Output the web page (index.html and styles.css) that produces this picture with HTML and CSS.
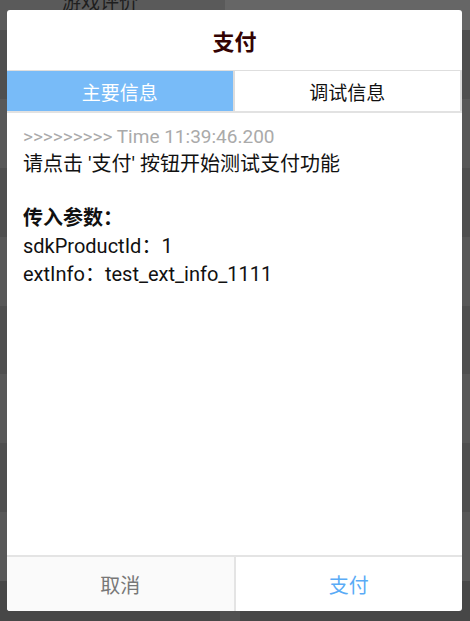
FILE: index.html
```html
<!DOCTYPE html>
<html lang="zh-CN">
<head>
<meta charset="utf-8">
<title>支付</title>
<link rel="stylesheet" href="styles.css">
</head>
<body>
<div class="screen">
  <div class="backdrop">
    <div class="bg-row bg-top"><span class="bg-label">游戏评价</span><span class="bg-btn"></span></div>
    <div class="bg-row bg-a"></div>
    <div class="bg-row bg-b"></div>
    <div class="bg-row bg-a"></div>
    <div class="bg-row bg-b"></div>
    <div class="bg-row bg-a"></div>
    <div class="bg-row bg-b"></div>
    <div class="bg-row bg-a"></div>
    <div class="bg-row bg-b"></div>
    <div class="bg-row bg-bottom"><span class="bg-tick"></span></div>
  </div>
  <div class="dialog">
    <div class="title">支付</div>
    <div class="tabs">
      <div class="tab tab-active">主要信息</div>
      <div class="tab tab-idle">调试信息</div>
    </div>
    <div class="content">
      <div class="time">&gt;&gt;&gt;&gt;&gt;&gt;&gt;&gt;&gt; Time 11:39:46.200</div>
      <div class="line">请点击 '支付' 按钮开始测试支付功能</div>
      <div class="line blank"></div>
      <div class="line bold">传入参数：</div>
      <div class="line">sdkProductId：1</div>
      <div class="line">extInfo：test_ext_info_1111</div>
    </div>
    <div class="actions">
      <div class="btn btn-cancel">取消</div>
      <div class="btn btn-pay">支付</div>
    </div>
  </div>
</div>
</body>
</html>
```

FILE: styles.css
```css
html, body {
  margin: 0;
  padding: 0;
}
body {
  width: 470px;
  height: 621px;
  overflow: hidden;
  font-family: Roboto, "Noto Sans CJK SC", sans-serif;
}
.screen {
  position: relative;
  width: 470px;
  height: 621px;
  background: #525252;
}
.backdrop {
  display: flex;
  flex-direction: column;
  height: 100%;
}
.bg-row {
  flex: 1;
}
.bg-top {
  flex: 0 0 30px;
  display: flex;
  background: #5a5a5a;
}
.bg-label {
  margin-left: 62px;
  margin-top: -10px;
  font-size: 19px;
  color: #1e1e1e;
  font-family: "Noto Sans CJK SC", sans-serif;
  line-height: 22px;
  height: 20px;
}
.bg-btn {
  margin-left: auto;
  width: 245px;
  background: #666;
}
.bg-a { background: #4f4f4f; }
.bg-b { background: #585858; }
.bg-bottom {
  flex: 0 0 40px;
  background: #474747;
  display: flex;
  justify-content: center;
}
.bg-tick {
  width: 20px;
  margin-left: -10px;
  margin-top: 10px;
  background: #505050;
}
.dialog {
  position: absolute;
  left: 7px;
  top: 10px;
  width: 455px;
  height: 601px;
  background: #fff;
  border-radius: 3px;
  overflow: hidden;
  display: flex;
  flex-direction: column;
}
.title {
  height: 61px;
  border-bottom: 1px solid #dedede;
  box-sizing: border-box;
  display: flex;
  align-items: center;
  justify-content: center;
  font-family: "Noto Sans CJK SC", sans-serif;
  font-weight: bold;
  font-size: 22px;
  color: #330303;
}
.tabs {
  display: flex;
  height: 42px;
  border-bottom: 2px solid #e2e2e2;
  box-sizing: border-box;
}
.tab {
  flex: 1;
  display: flex;
  align-items: center;
  justify-content: center;
  font-family: "Noto Sans CJK SC", sans-serif;
  font-size: 19px;
}
.tab-active {
  background: #78bbf8;
  color: #fff;
}
.tab-idle {
  color: #111;
  border-left: 2px solid #dcdcdc;
  border-right: 2px solid #dcdcdc;
}
.content {
  flex: 1;
  padding: 11px 16px 0 16px;
  color: #111;
  font-size: 20px;
  line-height: 28px;
}
.time {
  color: #aaa;
  font-size: 19px;
  line-height: 26px;
}
.line.blank {
  height: 26px;
}
.bold {
  font-weight: bold;
}
.actions {
  display: flex;
  height: 56px;
  border-top: 2px solid #e4e4e4;
  box-sizing: border-box;
}
.btn {
  flex: 1;
  display: flex;
  align-items: center;
  justify-content: center;
  font-family: "Noto Sans CJK SC", sans-serif;
  font-size: 20px;
}
.btn-cancel {
  background: #fafafa;
  color: #777;
  border-right: 2px solid #e4e4e4;
}
.btn-pay {
  color: #5aabf6;
}
```
